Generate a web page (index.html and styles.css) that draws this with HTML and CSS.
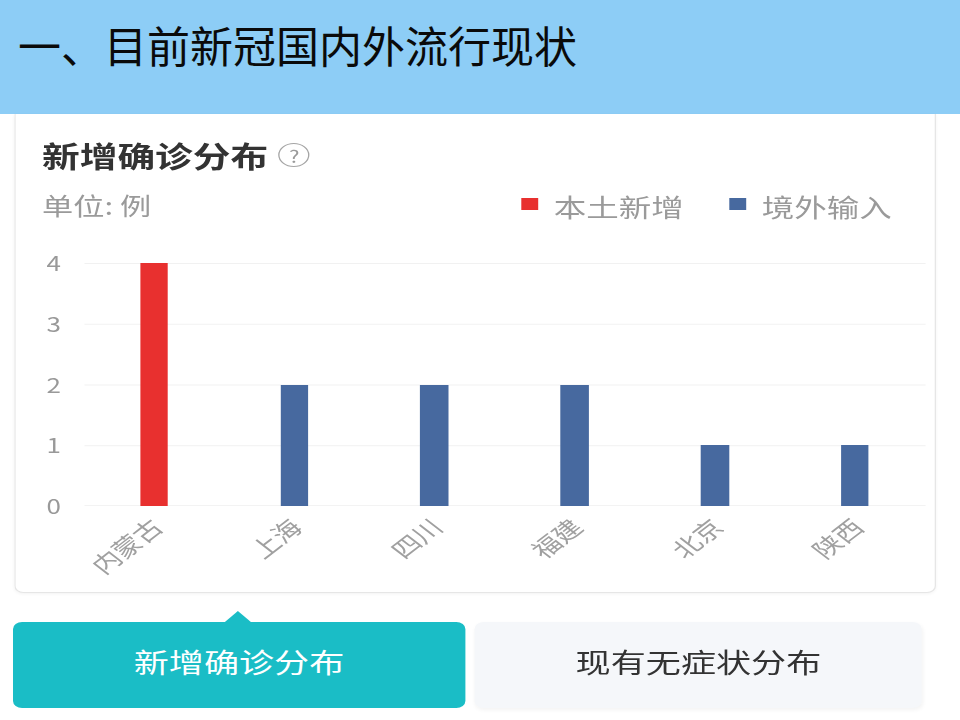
FILE: index.html
```html
<!DOCTYPE html>
<html lang="zh-CN">
<head>
<meta charset="utf-8">
<title>一、目前新冠国内外流行现状</title>
<link rel="stylesheet" href="styles.css">
</head>
<body>
<header class="header">
  <h1 class="title">一、目前新冠国内外流行现状</h1>
</header>
<main class="stretch">
  <section class="card">
    <div class="card-title">
      <span>新增确诊分布</span>
      <span class="help">?</span>
    </div>
    <div class="meta">
      <span class="unit">单位: 例</span>
      <div class="legend">
        <span class="legend-item"><i class="swatch local"></i>本土新增</span>
        <span class="legend-item"><i class="swatch import"></i>境外输入</span>
      </div>
    </div>
    <div class="chart">
      <div class="yaxis">
        <span>4</span><span>3</span><span>2</span><span>1</span><span>0</span>
      </div>
      <div class="plot">
        <div class="bar local" style="height:243px"></div>
        <div class="bar import" style="height:121.5px"></div>
        <div class="bar import" style="height:121.5px"></div>
        <div class="bar import" style="height:121.5px"></div>
        <div class="bar import" style="height:60.75px"></div>
        <div class="bar import" style="height:60.75px"></div>
      </div>
      <div class="xaxis">
        <div class="xcell"><span class="xlabel">内蒙古</span></div>
        <div class="xcell"><span class="xlabel">上海</span></div>
        <div class="xcell"><span class="xlabel">四川</span></div>
        <div class="xcell"><span class="xlabel">福建</span></div>
        <div class="xcell"><span class="xlabel">北京</span></div>
        <div class="xcell"><span class="xlabel">陕西</span></div>
      </div>
    </div>
  </section>
  <nav class="tabs">
    <div class="tab active">新增确诊分布</div>
    <div class="tab">现有无症状分布</div>
  </nav>
</main>
</body>
</html>
```
FILE: styles.css
```css
html, body {
  margin: 0;
  padding: 0;
}
body {
  width: 960px;
  height: 720px;
  overflow: hidden;
  background: #ffffff;
  font-family: "Noto Sans CJK SC", "Noto Sans", sans-serif;
}

.header {
  height: 114px;
  box-sizing: border-box;
  background: #8dcdf6;
  padding: 23px 0 0 18px;
}
.title {
  margin: 0;
  font-size: 43px;
  line-height: 43px;
  font-weight: 400;
  color: #0a0a0a;
  white-space: nowrap;
}

/* The reference content is a phone screenshot stretched horizontally */
.stretch {
  width: 738.5px;
  transform: scaleX(1.3);
  transform-origin: 0 0;
}

.card {
  margin-left: 10.8px;
  width: 709.2px;
  box-sizing: border-box;
  background: #fff;
  border: 1px solid #e6e6e6;
  border-top: none;
  border-radius: 0 0 7px 7px;
  box-shadow: 0 1px 3px rgba(0, 0, 0, 0.05);
  padding: 24px 7.4px 26px 20.5px;
}

.card-title {
  display: flex;
  align-items: center;
  gap: 8px;
  font-size: 29px;
  line-height: 34px;
  font-weight: 700;
  color: #333;
}
.help {
  width: 22px;
  height: 22px;
  border: 1.3px solid #a5a5a5;
  border-radius: 50%;
  display: inline-flex;
  align-items: center;
  justify-content: center;
  font-size: 17px;
  line-height: 1;
  font-weight: 400;
  color: #9a9a9a;
}

.meta {
  margin-top: 17.5px;
  display: flex;
  justify-content: space-between;
  align-items: center;
  height: 30px;
}
.unit {
  font-size: 24px;
  line-height: 30px;
  color: #9a9a9a;
}
.legend {
  display: flex;
  gap: 35px;
  margin-right: 25.6px;
  padding-top: 3px;
}
.legend-item {
  display: flex;
  align-items: center;
  gap: 12px;
  font-size: 25px;
  line-height: 30px;
  color: #9a9a9a;
}
.swatch {
  display: inline-block;
  width: 13px;
  height: 12px;
  margin-top: -4px;
}
.local { background: #e8302f; }
.import { background: #47699f; }

.chart {
  margin-top: 43.5px;
  display: grid;
  grid-template-columns: 32.3px 1fr;
  grid-template-rows: 243px 60px;
}
.yaxis {
  grid-column: 1;
  grid-row: 1;
  margin: -10px 0;
  padding-left: 3.5px;
  display: flex;
  flex-direction: column;
  justify-content: space-between;
  font-size: 20px;
  line-height: 20px;
  color: #999;
}
.plot {
  grid-column: 2;
  grid-row: 1;
  display: grid;
  grid-template-columns: repeat(6, 1fr);
  align-items: end;
  justify-items: center;
  background-image: linear-gradient(to bottom, #f1f1f1 1px, transparent 1px);
  background-size: 100% 60.75px;
  background-repeat: repeat-y;
  border-bottom: 1px solid #f3f3f3;
}
.bar {
  width: 21.5px;
}
.xaxis {
  grid-column: 2;
  grid-row: 2;
  display: grid;
  grid-template-columns: repeat(6, 1fr);
}
.xcell {
  display: flex;
  justify-content: flex-end;
  align-items: flex-start;
  padding-right: calc(50% + 7px);
  padding-top: 8px;
}
.xlabel {
  display: inline-block;
  white-space: nowrap;
  font-size: 22px;
  line-height: 22px;
  color: #a0a0a0;
  transform: rotate(-45deg);
  transform-origin: 100% 0;
}

.tabs {
  margin-top: 29px;
  margin-left: 10px;
  display: flex;
  gap: 7.7px;
}
.tab {
  height: 86px;
  box-sizing: border-box;
  display: flex;
  align-items: center;
  justify-content: center;
  padding-bottom: 8px;
  font-size: 27px;
  line-height: 1;
  border-radius: 7px;
  width: 343.8px;
  background: #f5f7fa;
  color: #333;
  box-shadow: 1px 2px 4px rgba(0, 0, 0, 0.05);
}
.tab.active {
  position: relative;
  width: 347.7px;
  background: #1abdc6;
  color: #fff;
  box-shadow: none;
}
.tab.active::before {
  content: "";
  position: absolute;
  top: -11px;
  left: 50%;
  margin-left: -10.5px;
  border-left: 10.5px solid transparent;
  border-right: 10.5px solid transparent;
  border-bottom: 11px solid #1abdc6;
}
```
